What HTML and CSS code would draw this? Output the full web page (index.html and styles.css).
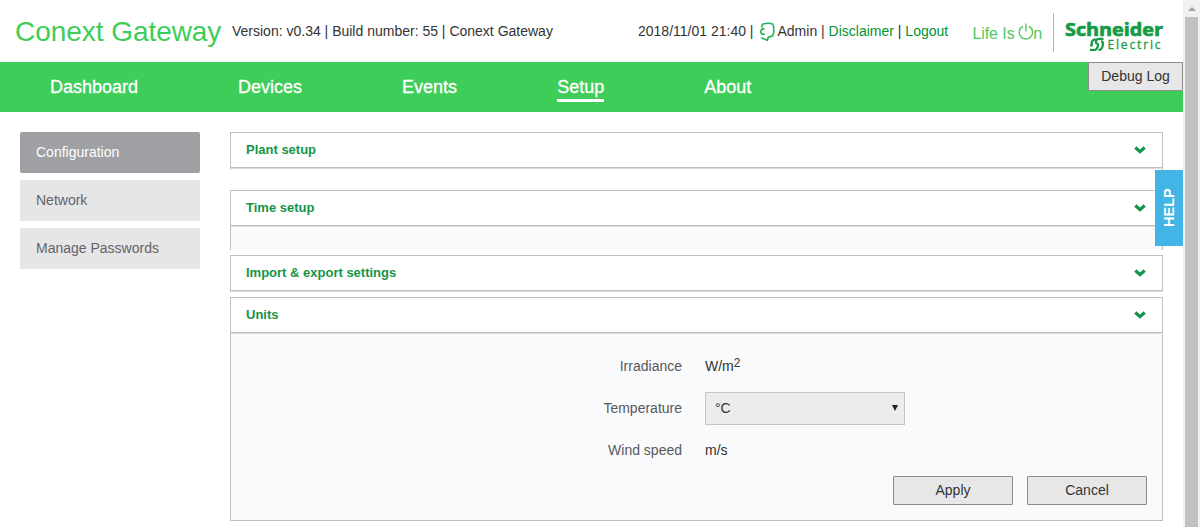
FILE: index.html
```html
<!DOCTYPE html>
<html lang="en">
<head>
<meta charset="utf-8">
<title>Conext Gateway</title>
<link rel="stylesheet" href="styles.css">
</head>
<body>
<div class="window">
  <div class="page">
    <header class="header">
      <h1 class="brand">Conext Gateway</h1>
      <div class="version">Version: v0.34 | Build number: 55 | Conext Gateway</div>
      <div class="session">
        <span>2018/11/01 21:40 |</span>
        <svg class="user-icon" viewBox="0 0 16 20" width="16" height="20"><path d="M3 5.500C2.500 3 3.500 1.600 5.500 1.700C8 1.100 11 1.200 13.500 2C15.200 3.500 14.800 5.500 14.600 7.500L14.800 10.500L13.300 14L9.300 15.200L8.300 18.300L2.300 15.800M5.500 7L3.600 6.700C1.500 8 1.200 10.500 2.800 11.800C3.800 12.400 4.800 12.400 5.800 12" fill="none" stroke="#1fb25a" stroke-width="1.600"/></svg>
        <span>Admin | <a class="link">Disclaimer</a> | <a class="link">Logout</a></span>
      </div>
      <svg class="life" viewBox="0 0 72 24" width="72" height="24">
        <text class="life-text" x="0.500" y="17.500" textLength="42" lengthAdjust="spacingAndGlyphs">Life Is</text>
        <path d="M51 5.200A6.700 6.700 0 1 0 56.800 5.200M53.900 2.500V10.500" fill="none" stroke="#5ccd66" stroke-width="1.500"/>
        <text class="life-text" x="61.200" y="17.500" textLength="9" lengthAdjust="spacingAndGlyphs">n</text>
      </svg>
      <div class="rule"></div>
      <svg class="schneider" viewBox="0 0 100 34" width="100" height="34">
        <text class="logo-name" x="0" y="16" textLength="98" lengthAdjust="spacingAndGlyphs">Schneider</text>
        <path class="emblem-gap" d="M26 26L28 19L38 18"/>
        <path class="emblem" d="M38.500 18.800H34C30.500 18.800 30 23.500 32 23.500C34.200 23.500 32.500 29.800 29.500 30L25 29.800M30.500 19.200C26.500 19.800 25.300 24.500 28 24.600M27.500 25.500H25M36 21C39.500 22 38 29.500 33.500 30.200"/>
        <text class="logo-sub" x="42.500" y="28.500" textLength="53">Electric</text>
      </svg>
    </header>
    <nav class="nav">
      <a class="nav-item">Dashboard</a>
      <a class="nav-item">Devices</a>
      <a class="nav-item">Events</a>
      <a class="nav-item nav-active">Setup</a>
      <a class="nav-item">About</a>
      <button class="debug">Debug Log</button>
    </nav>
    <div class="content">
      <aside class="sidebar">
        <a class="side-item side-active">Configuration</a>
        <a class="side-item">Network</a>
        <a class="side-item">Manage Passwords</a>
      </aside>
      <main class="panels">
        <section class="panel panel-plant">
          <h2 class="panel-head">Plant setup<svg class="chevron" viewBox="0 0 12 8" width="12" height="8"><path d="M1.300 1.500L6 5.700L10.700 1.500" /></svg></h2>
          <div class="panel-body"></div>
        </section>
        <section class="panel panel-time">
          <h2 class="panel-head">Time setup<svg class="chevron" viewBox="0 0 12 8" width="12" height="8"><path d="M1.300 1.500L6 5.700L10.700 1.500" /></svg></h2>
          <div class="panel-body"></div>
        </section>
        <section class="panel panel-import">
          <h2 class="panel-head">Import &amp; export settings<svg class="chevron" viewBox="0 0 12 8" width="12" height="8"><path d="M1.300 1.500L6 5.700L10.700 1.500" /></svg></h2>
        </section>
        <section class="panel panel-units">
          <h2 class="panel-head">Units<svg class="chevron" viewBox="0 0 12 8" width="12" height="8"><path d="M1.300 1.500L6 5.700L10.700 1.500" /></svg></h2>
          <div class="panel-body">
            <div class="form">
              <span class="label">Irradiance</span><span class="value">W/m<sup>2</sup></span>
              <span class="label">Temperature</span><div class="select"><span>°C</span><span class="arrow"></span></div>
              <span class="label">Wind speed</span><span class="value">m/s</span>
            </div>
            <div class="actions">
              <button class="button">Apply</button>
              <button class="button">Cancel</button>
            </div>
          </div>
        </section>
      </main>
    </div>
    <div class="help">HELP</div>
  </div>
  <div class="scrollbar"><span class="scroll-up"></span><div class="thumb"></div></div>
</div>
</body>
</html>
```
FILE: styles.css
```css
* { box-sizing: border-box; }
body {
  margin: 0;
  background: #fff;
  color: #333;
  font: 14px/20px "Liberation Sans", Arial, sans-serif;
  overflow: hidden;
}
.window { display: flex; width: 1200px; height: 527px; }
.page { position: relative; width: 1183px; }
.header { display: flex; align-items: center; height: 62px; padding-left: 15px; white-space: nowrap; }
.brand { width: 217px; margin: 0; padding-top: 2px; color: #3dcd58; font-size: 28px; font-weight: 400; line-height: 60px; letter-spacing: -0.050px; }
.version { width: 406px; }
.session { display: flex; align-items: center; width: 334px; }
.user-icon { margin: 1px 2px 0 6px; flex: none; }
.link { color: #009530; }
.life { margin-top: 3px; flex: none; }
.life-text { fill: #50c95b; font: 17px "Liberation Sans", Arial, sans-serif; }
.rule { width: 1px; height: 39px; margin: 2px 11px 0 9px; background: #b5b5b5; }
.schneider { margin-top: 11px; flex: none; overflow: visible; }
.logo-name { fill: #159b46; stroke: #159b46; stroke-width: 0.700px; font: bold 18px "Open Sans", "Noto Sans", sans-serif; }
.logo-sub { fill: #159b46; stroke: #159b46; stroke-width: 0.300px; font: 12px "Open Sans", "Noto Sans", sans-serif; }
.emblem-gap { fill: none; stroke: #fff; stroke-width: 2px; }
.emblem { fill: none; stroke: #159b46; stroke-width: 2.200px; }
.nav { position: relative; display: flex; gap: 100px; height: 50px; padding: 15px 0 0 50px; background: #3dcd58; }
.nav-item { height: 25px; color: #fff; font-size: 18px; line-height: 20px; -webkit-text-stroke: 0.300px #fff; }
.nav-active { border-bottom: 3px solid #fff; }
.button, .debug {
  height: 29px;
  padding: 0 0 2px;
  border: 1px solid #8c8c8f;
  border-radius: 1px;
  background: #e7e7e8;
  color: #333;
  font: 14px/20px "Liberation Sans", Arial, sans-serif;
}
.debug { position: absolute; top: 0; right: 0; width: 95px; }
.content { display: flex; gap: 30px; padding: 20px 20px 0; }
.sidebar { display: flex; flex-direction: column; gap: 7px; width: 180px; }
.side-item { height: 41px; padding-left: 16px; border-radius: 1px; background: #e6e6e6; color: #626469; line-height: 41px; }
.side-active { background: #9fa0a4; color: #fff; border-radius: 2px; }
.panels { width: 933px; }
.panel-head {
  position: relative;
  display: flex;
  justify-content: space-between;
  align-items: center;
  height: 36px;
  margin: 0;
  padding: 0 16px 0 15px;
  border: 1px solid #bfbfc1;
  box-shadow: 0 1px 0 #dcdcde;
  color: #159447;
  font-size: 13px;
  font-weight: 700;
}
.chevron { fill: none; stroke: #159447; stroke-width: 3.100px; }
.panel-body { border: 1px solid #bfbfc1; border-width: 0 1px; background: #f9fafc; }
.panel-plant { height: 58px; }
.panel-plant .panel-body { height: 2px; background: #fff; }
.panel-time { height: 65px; }
.panel-time .panel-body { height: 24px; }
.panel-import { height: 42px; }
.panel-units .panel-body { height: 188px; padding: 17px 15px 0 0; border-bottom-width: 1px; }
.form { display: grid; grid-template-columns: 451px 200px; grid-template-rows: 33px 33px 33px; gap: 9px 23px; align-items: center; }
.label { padding-bottom: 2px; text-align: right; color: #58595b; }
.value { padding-bottom: 2px; }
.value sup { font-size: 12px; line-height: 0; vertical-align: 4px; }
.select { display: flex; justify-content: space-between; align-items: center; height: 33px; padding: 0 6px 2px 9px; border: 1px solid #c4c4c6; background: #ececec; }
.arrow { border: 3px solid transparent; border-top: 6px solid #222; border-bottom: 0; }
.actions { display: flex; justify-content: flex-end; gap: 14px; margin-top: 9px; }
.button { width: 120px; }
.help {
  position: absolute;
  top: 170px;
  right: 0;
  width: 28px;
  height: 76px;
  background: #42b4e6;
  color: #fff;
  font-size: 14.500px;
  font-weight: 700;
  line-height: 28px;
  text-align: center;
  writing-mode: vertical-rl;
  transform: rotate(180deg);
}
.scrollbar { display: flex; flex-direction: column; align-items: center; width: 17px; background: #f1f1f1; }
.scroll-up { height: 4px; margin: 7px 0 6px; border: 4px solid transparent; border-top: 0; border-bottom: 4px solid #a3a3a3; }
.thumb { width: 13px; flex: 1; background: #c1c1c1; }
```
